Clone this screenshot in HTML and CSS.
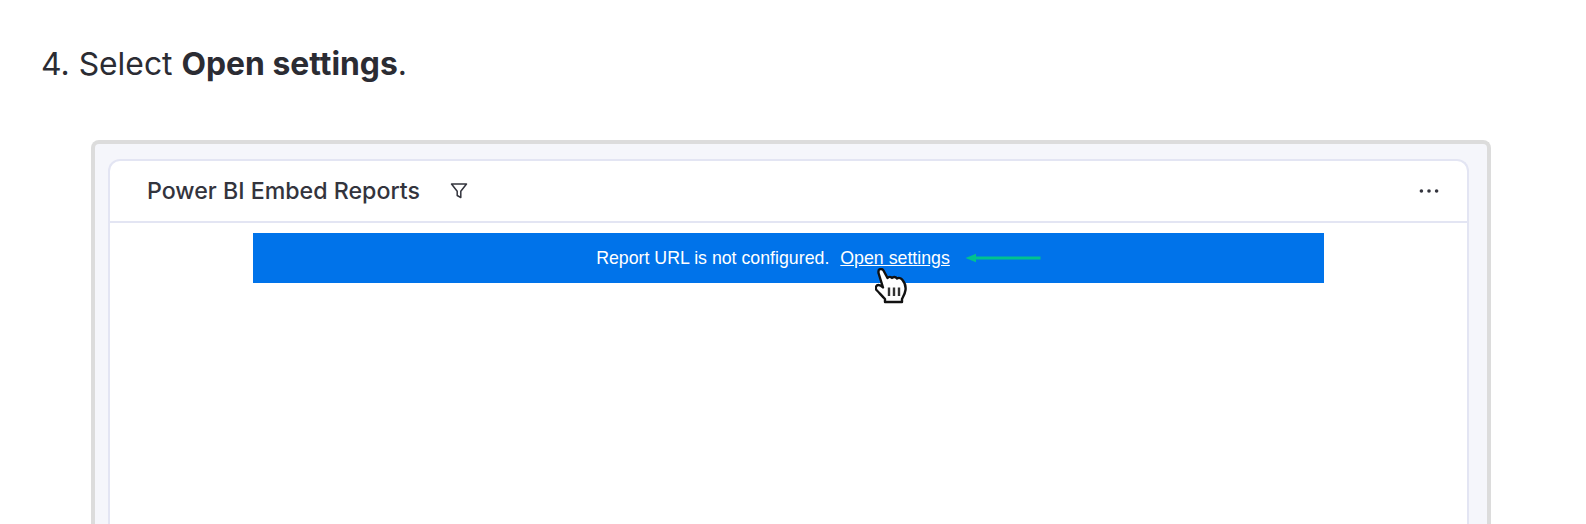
FILE: index.html
```html
<!DOCTYPE html>
<html lang="en">
<head>
<meta charset="utf-8">
<title>Select Open settings</title>
<link rel="stylesheet" href="styles.css">
</head>
<body>
<main class="page">
  <p class="step">4. Select <strong>Open settings</strong>.</p>
  <div class="shot">
    <section class="panel">
      <header class="panel-head">
        <h2 class="panel-title">Power BI Embed Reports</h2>
        <svg class="filter" viewBox="0 0 18 18" width="18" height="18" aria-hidden="true"><path d="M1.500 2h15L10.800 9.300v6.200l-3.600-2V9.300z" fill="none" stroke="#33343d" stroke-width="1.500" stroke-linejoin="round"/></svg>
        <svg class="more" viewBox="0 0 20 4" width="20" height="4" aria-hidden="true"><circle cx="2.400" cy="2" r="1.800"/><circle cx="10" cy="2" r="1.800"/><circle cx="17.600" cy="2" r="1.800"/></svg>
      </header>
      <div class="panel-body">
        <div class="notice">
          <span>Report URL is not configured.</span>
          <a class="notice-link" href="#">Open settings</a>
          <svg class="arrow" viewBox="0 0 76 10" width="76" height="10" aria-hidden="true"><path d="M0.500 5L11 0.800V3.600H75.500V6.400H11V9.200z" fill="#00c28f"/></svg>
          <svg class="cursor" viewBox="0 0 32 36" width="32" height="36" aria-hidden="true">
            <path d="M3.500 3C3.500 1 7 0 8.500 2.500L12.500 10C13.500 8.500 15.500 8.500 17 10C18 8.500 20.500 8.500 22 10.500C23.500 9.500 26 10 27.500 12C30 15 31 18 30.500 22C30 26 28 29 27 31V34H10V31C7 28 4 24.500 1.500 22C0 20 1 17 3.500 17C5 17 6.500 18 8 19.500L3.500 5Z" fill="#fff" stroke="#111" stroke-width="2.400" stroke-linejoin="round"/>
            <path d="M14 19.500V28M19 19.500V28M24 19.500V28" stroke="#333" stroke-width="2.400" fill="none"/>
          </svg>
        </div>
      </div>
    </section>
  </div>
</main>
</body>
</html>
```
FILE: styles.css
```css
html, body {
  margin: 0;
  height: 524px;
  overflow: hidden;
  background: #fff;
}
.page {
  height: 524px;
  overflow: hidden;
  padding: 0 95px 0 41px;
  box-sizing: border-box;
}
.step {
  margin: 0;
  padding-top: 44px;
  height: 140px;
  box-sizing: border-box;
  font: 400 31.850px/40px Inter, sans-serif;
  color: #2b2c33;
}
.step strong {
  font-weight: 700;
}
.shot {
  margin-left: 50px;
  height: 500px;
  box-sizing: border-box;
  border: 4px solid #dcdcdc;
  border-bottom: 0;
  border-radius: 8px 8px 0 0;
  background: #f5f6fb;
  padding: 15px 18px 0 13px;
}
.panel {
  height: 500px;
  box-sizing: border-box;
  background: #fff;
  border: 2px solid #e3e5f3;
  border-bottom: 0;
  border-radius: 12px 12px 0 0;
}
.panel-head {
  height: 60px;
  display: flex;
  align-items: center;
  padding: 0 20px 0 37px;
  border-bottom: 2px solid #e3e5f3;
}
.panel-title {
  margin: 0;
  font: 500 23.200px/30px Inter, sans-serif;
  color: #33343d;
}
.filter {
  margin-left: 30px;
}
.more {
  margin-left: auto;
  margin-right: 8px;
  fill: #33343d;
}
.panel-body {
  padding: 10px 0 0 143px;
}
.notice {
  position: relative;
  width: 1071px;
  height: 50px;
  padding-left: 60px;
  box-sizing: border-box;
  display: flex;
  align-items: center;
  justify-content: center;
  background: #0073ea;
  color: #fff;
  font: 400 17.750px/24px "Liberation Sans", sans-serif;
}
.notice-link {
  margin-left: 11px;
  color: #fff;
  text-decoration: underline;
}
.arrow {
  margin-left: 15px;
}
.cursor {
  position: absolute;
  left: 622px;
  top: 35px;
}
```
